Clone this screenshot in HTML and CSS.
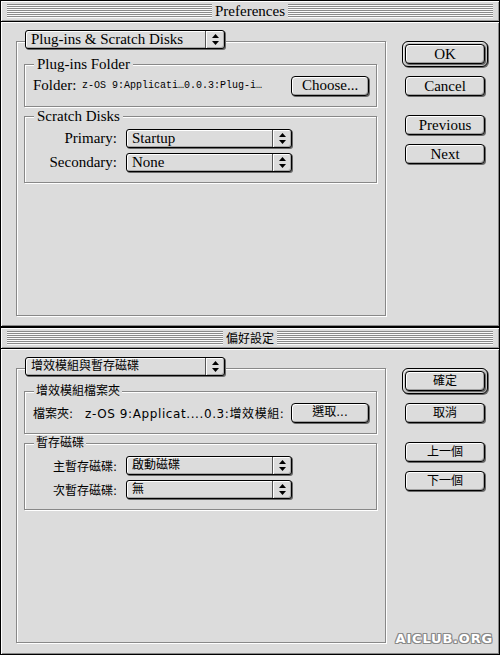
FILE: index.html
```html
<!DOCTYPE html>
<html lang="en">
<head>
<meta charset="utf-8">
<title>Preferences</title>
<link rel="stylesheet" href="styles.css">
</head>
<body>
<div class="window win-top en">
  <div class="titlebar"><span class="stripes"></span><span class="title">Preferences</span><span class="stripes"></span></div>
  <div class="content">
    <div class="main">
      <div class="popup popup-main"><span class="popup-text">Plug-ins &amp; Scratch Disks</span><span class="popup-arrow"><svg width="7" height="11" viewBox="0 0 7 11"><path d="M3.5 0L7 4H0Z M0 7H7L3.5 11Z" fill="#000"/></svg></span></div>
      <div class="frame">
        <div class="group group-folder">
          <span class="legend">Plug-ins Folder</span>
          <span class="folder-label">Folder:</span>
          <span class="path path-en">z-OS 9:Applicati…0.0.3:Plug-i…</span>
          <button class="btn btn-choose">Choose...</button>
        </div>
        <div class="group group-disks">
          <span class="legend">Scratch Disks</span>
          <div class="disk-grid">
            <span class="disk-label">Primary:</span>
            <div class="popup popup-disk"><span class="popup-text">Startup</span><span class="popup-arrow"><svg width="7" height="11" viewBox="0 0 7 11"><path d="M3.5 0L7 4H0Z M0 7H7L3.5 11Z" fill="#000"/></svg></span></div>
            <span class="disk-label">Secondary:</span>
            <div class="popup popup-disk"><span class="popup-text">None</span><span class="popup-arrow"><svg width="7" height="11" viewBox="0 0 7 11"><path d="M3.5 0L7 4H0Z M0 7H7L3.5 11Z" fill="#000"/></svg></span></div>
          </div>
        </div>
      </div>
    </div>
    <div class="buttons">
      <div class="default-ring"><button class="btn">OK</button></div>
      <button class="btn btn-cancel">Cancel</button>
      <button class="btn btn-prev">Previous</button>
      <button class="btn btn-next">Next</button>
    </div>
  </div>
</div>
<div class="window win-bottom zh">
  <div class="titlebar"><span class="stripes"></span><span class="title">偏好設定</span><span class="stripes"></span></div>
  <div class="content">
    <div class="main">
      <div class="popup popup-main"><span class="popup-text">增效模組與暫存磁碟</span><span class="popup-arrow"><svg width="7" height="11" viewBox="0 0 7 11"><path d="M3.5 0L7 4H0Z M0 7H7L3.5 11Z" fill="#000"/></svg></span></div>
      <div class="frame">
        <div class="group group-folder">
          <span class="legend">增效模組檔案夾</span>
          <span class="folder-label">檔案夾:</span>
          <span class="path path-zh">z-OS 9:Applicat....0.3:增效模組:</span>
          <button class="btn btn-choose">選取...</button>
        </div>
        <div class="group group-disks">
          <span class="legend">暫存磁碟</span>
          <div class="disk-grid">
            <span class="disk-label">主暫存磁碟:</span>
            <div class="popup popup-disk"><span class="popup-text">啟動磁碟</span><span class="popup-arrow"><svg width="7" height="11" viewBox="0 0 7 11"><path d="M3.5 0L7 4H0Z M0 7H7L3.5 11Z" fill="#000"/></svg></span></div>
            <span class="disk-label">次暫存磁碟:</span>
            <div class="popup popup-disk"><span class="popup-text">無</span><span class="popup-arrow"><svg width="7" height="11" viewBox="0 0 7 11"><path d="M3.5 0L7 4H0Z M0 7H7L3.5 11Z" fill="#000"/></svg></span></div>
          </div>
        </div>
      </div>
    </div>
    <div class="buttons">
      <div class="default-ring"><button class="btn">確定</button></div>
      <button class="btn btn-cancel">取消</button>
      <button class="btn btn-prev">上一個</button>
      <button class="btn btn-next">下一個</button>
    </div>
  </div>
  <span class="watermark">AICLUB.ORG</span>
</div>
</body>
</html>
```

FILE: styles.css
```css
* { box-sizing: border-box; }

html, body {
  margin: 0;
  padding: 0;
  background: #000;
}

body {
  width: 500px;
  height: 655px;
  overflow: hidden;
}

/* Buttons (base) */
.btn {
  display: block;
  width: 80px;
  height: 20px;
  padding: 0;
  margin: 0;
  border: 1px solid #000;
  border-radius: 4px;
  background: #dcdcdc;
  color: #000;
  font: inherit;
  line-height: 17px;
  text-align: center;
  white-space: nowrap;
  box-shadow: inset 1px 1px 0 #fff, inset -1px -1px 0 #a0a0a0, 1px 1px 0 #6a6a6a;
}

.window {
  position: relative;
  width: 500px;
  border: 1px solid #000;
  background: #dcdcdc;
  display: flex;
  flex-direction: column;
  color: #000;
}

.win-top { height: 327px; }
.win-bottom { height: 328px; }

.en {
  font-family: "Liberation Serif", "Times New Roman", serif;
  font-size: 15px;
}

.zh {
  font-family: "DejaVu Sans", "Noto Sans CJK TC", sans-serif;
  font-size: 12px;
}

/* Title bar */
.titlebar {
  height: 21px;
  flex: none;
  display: flex;
  align-items: center;
  padding: 0 6px;
  border-bottom: 1px solid #000;
  background: #dcdcdc;
  box-shadow: inset 1px 1px 0 #fff, inset -1px -1px 0 #9a9a9a;
}

.stripes {
  flex: 1;
  height: 14px;
  background: repeating-linear-gradient(to bottom, #8a8a8a 0, #8a8a8a 1px, #fafafa 1px, #fafafa 2px);
}

.title {
  padding: 0 3px;
  line-height: 18px;
  white-space: nowrap;
}

.zh .title {
  font-family: "Noto Sans CJK TC", sans-serif;
  font-size: 12px;
}

/* Content */
.content {
  flex: 1;
  display: flex;
  padding: 8px 11px 0 15px;
  box-shadow: inset 1px 1px 0 #fff, inset -1px -1px 0 #888;
}

.main {
  width: 370px;
  flex: none;
  display: flex;
  flex-direction: column;
}

/* Popups */
.popup {
  display: flex;
  height: 19px;
  border: 1px solid #000;
  border-radius: 3px;
  background: #dcdcdc;
  box-shadow: 1px 1px 0 #6a6a6a, inset 1px 1px 0 #fff, inset -1px -1px 0 #a8a8a8;
  white-space: nowrap;
}

.popup-main {
  position: relative;
  z-index: 1;
  width: 200px;
  margin-left: 9px;
}

.popup-disk {
  width: 166px;
}

.popup-text {
  flex: 1;
  padding-left: 5px;
  line-height: 17px;
  overflow: hidden;
}

.popup-arrow {
  width: 19px;
  flex: none;
  display: flex;
  align-items: center;
  justify-content: center;
  border-left: 1px solid #555;
  box-shadow: inset 1px 0 0 #fff;
}

.popup-arrow svg { display: block; }

/* Frame and groups */
.frame {
  margin-top: -8px;
  height: 275px;
  border: 1px solid #888;
  box-shadow: inset 1px 1px 0 #fff, 1px 1px 0 #fff;
  padding: 22px 8px 0 7px;
}

.group {
  position: relative;
  border: 1px solid #888;
  box-shadow: inset 1px 1px 0 #fff, 1px 1px 0 #fff;
}

.legend {
  position: absolute;
  top: -9px;
  left: 9px;
  padding: 0 3px;
  line-height: 16px;
  background: #dcdcdc;
  white-space: nowrap;
}

.zh .legend { padding: 0 2px; top: -9px; }

.group-folder {
  height: 43px;
  display: flex;
  align-items: center;
  padding: 0 7px 0 8px;
}

.folder-label {
  width: 49px;
  flex: none;
}

.zh .folder-label { width: 52px; }

.path {
  white-space: nowrap;
}

.path-en {
  font-family: "Liberation Mono", monospace;
  font-size: 10px;
}

.path-zh {
  letter-spacing: 0.6px;
}

.group .btn-choose {
  margin-left: auto;
  width: 78px;
  flex: none;
}

.group-disks {
  margin-top: 9px;
  height: 67px;
  padding: 12px 0 0 8px;
}

.disk-grid {
  display: grid;
  grid-template-columns: 84px 166px;
  column-gap: 9px;
  row-gap: 5px;
  align-items: center;
}

.disk-label {
  text-align: right;
  white-space: nowrap;
}

/* Button column */
.buttons {
  margin-left: 16px;
  padding-top: 11px;
  width: 86px;
  display: flex;
  flex-direction: column;
  align-items: flex-start;
}

.default-ring {
  border: 1px solid #000;
  border-radius: 6px;
  padding: 2px;
  background: #c4c4c4;
  box-shadow: inset 1px 1px 0 #eee, 1px 1px 0 #6a6a6a;
}

.buttons .btn-cancel { margin: 9px 0 0 3px; }
.buttons .btn-prev { margin: 19px 0 0 3px; }
.buttons .btn-next { margin: 9px 0 0 3px; }

/* Watermark */
.watermark {
  position: absolute;
  right: 6px;
  bottom: 9px;
  font-family: "DejaVu Sans", sans-serif;
  font-weight: bold;
  font-size: 13px;
  line-height: 13px;
  color: #fff;
  letter-spacing: 0.8px;
  text-shadow: 1px 0 0 #8a8a8a, -1px 0 0 #8a8a8a, 0 1px 0 #8a8a8a, 0 -1px 0 #8a8a8a, 1px 1px 0 #8a8a8a, -1px -1px 0 #8a8a8a, 1px -1px 0 #8a8a8a, -1px 1px 0 #8a8a8a;
}
```
